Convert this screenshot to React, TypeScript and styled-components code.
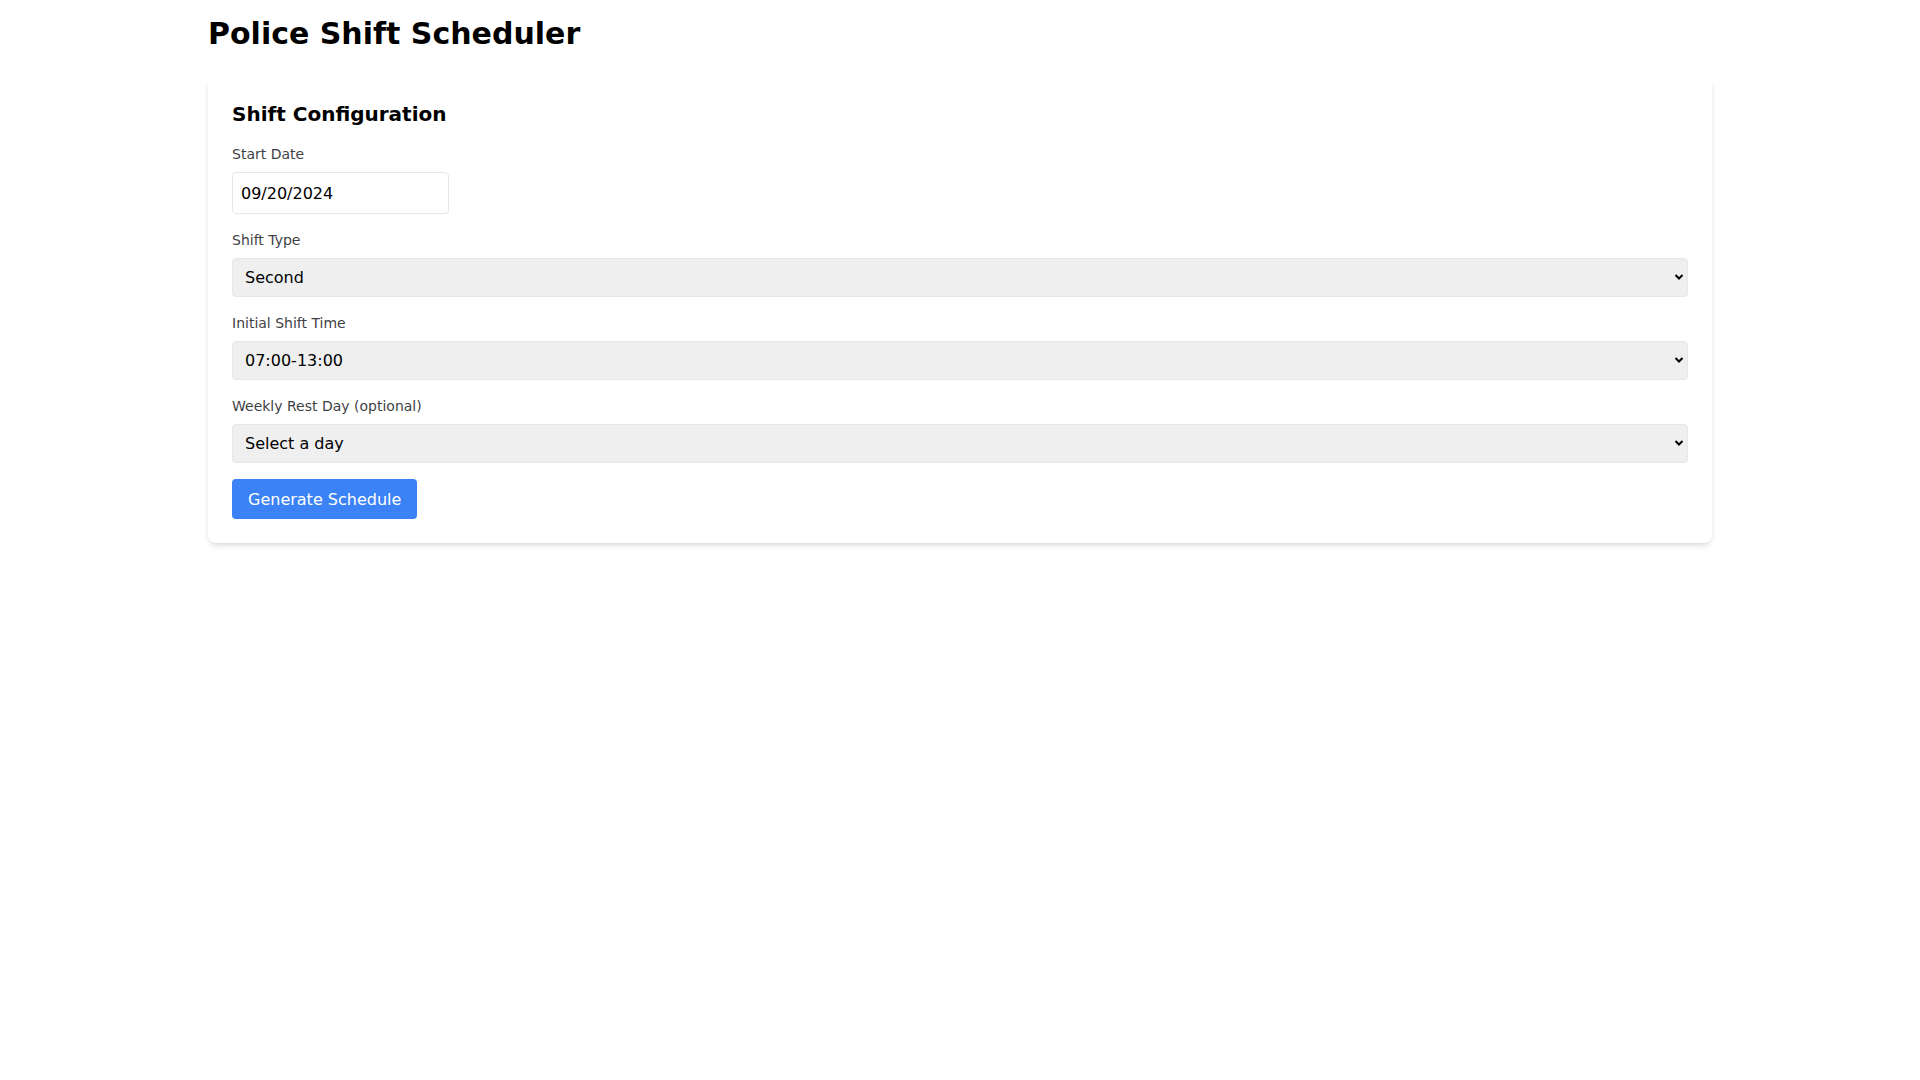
import React, { useState } from 'react';
import styled, { createGlobalStyle } from 'styled-components';

const GlobalStyle = createGlobalStyle`
  * { box-sizing: border-box; }
  body {
    margin: 0;
    background: #ffffff;
    font-family: "DejaVu Sans", sans-serif;
    color: #000;
  }
`;

const Page = styled.main`
  max-width: 1536px;
  margin: 0 auto;
  padding: 16px;
`;

const Title = styled.h1`
  margin: 0 0 24px;
  font-size: 30px;
  line-height: 36px;
  font-weight: 700;
`;

const Card = styled.section`
  background: #fff;
  border-radius: 8px;
  padding: 24px;
  box-shadow: 0 4px 6px -1px rgba(0, 0, 0, 0.1), 0 2px 4px -2px rgba(0, 0, 0, 0.1);
`;

const CardTitle = styled.h2`
  margin: 0 0 16px;
  font-size: 20px;
  line-height: 28px;
  font-weight: 700;
`;

const Field = styled.div`
  margin-bottom: 16px;
`;

const Label = styled.label`
  display: block;
  margin-bottom: 8px;
  font-size: 14px;
  line-height: 20px;
  color: #3f3f46;
`;

const DateInput = styled.input`
  display: block;
  width: 217px;
  height: 42px;
  padding: 0 8px;
  border: 1px solid #e5e7eb;
  border-radius: 4px;
  font-family: inherit;
  font-size: 16px;
  color: #000;
  background: #fff;
  outline: none;
`;

const SelectWrap = styled.div`
  position: relative;
`;

const Select = styled.select`
  display: block;
  width: 100%;
  height: 39px;
  padding: 0 12px;
  border: 1px solid #e5e7eb;
  border-radius: 4px;
  background: #efefef;
  font-family: inherit;
  font-size: 16px;
  color: #000;
  appearance: none;
  outline: none;
`;

const Chevron = styled.svg`
  position: absolute;
  right: 4px;
  top: 15px;
  width: 10px;
  height: 8px;
  pointer-events: none;
`;

const Button = styled.button`
  height: 40px;
  padding: 0 16px;
  border: none;
  border-radius: 4px;
  background: #3b82f6;
  color: #fff;
  font-family: inherit;
  font-size: 16px;
  cursor: pointer;
`;

type Option = { value: string; label: string };

function SelectField({ label, value, options, onChange }: { label: string; value: string; options: Option[]; onChange: (v: string) => void }) {
  return (
    <Field>
      <Label>{label}</Label>
      <SelectWrap>
        <Select value={value} onChange={(e) => onChange(e.target.value)}>
          {options.map((o) => (
            <option key={o.value} value={o.value}>{o.label}</option>
          ))}
        </Select>
        <Chevron viewBox="0 0 10 8">
          <path d="M1.5 2 L5 5.5 L8.5 2" fill="none" stroke="#000" strokeWidth="2" />
        </Chevron>
      </SelectWrap>
    </Field>
  );
}

const shiftTypes: Option[] = [
  { value: 'first', label: 'First' },
  { value: 'second', label: 'Second' },
  { value: 'third', label: 'Third' },
];

const shiftTimes: Option[] = [
  { value: '07:00-13:00', label: '07:00-13:00' },
  { value: '13:00-19:00', label: '13:00-19:00' },
  { value: '19:00-07:00', label: '19:00-07:00' },
];

const days: Option[] = [
  { value: '', label: 'Select a day' },
  { value: 'mon', label: 'Monday' },
  { value: 'tue', label: 'Tuesday' },
  { value: 'wed', label: 'Wednesday' },
  { value: 'thu', label: 'Thursday' },
  { value: 'fri', label: 'Friday' },
  { value: 'sat', label: 'Saturday' },
  { value: 'sun', label: 'Sunday' },
];

export default function App() {
  const [date, setDate] = useState('09/20/2024');
  const [type, setType] = useState('second');
  const [time, setTime] = useState('07:00-13:00');
  const [rest, setRest] = useState('');

  return (
    <Page>
      <GlobalStyle />
      <Title>Police Shift Scheduler</Title>
      <Card>
        <CardTitle>Shift Configuration</CardTitle>
        <Field>
          <Label>Start Date</Label>
          <DateInput value={date} onChange={(e) => setDate(e.target.value)} />
        </Field>
        <SelectField label="Shift Type" value={type} options={shiftTypes} onChange={setType} />
        <SelectField label="Initial Shift Time" value={time} options={shiftTimes} onChange={setTime} />
        <SelectField label="Weekly Rest Day (optional)" value={rest} options={days} onChange={setRest} />
        <Button>Generate Schedule</Button>
      </Card>
    </Page>
  );
}
